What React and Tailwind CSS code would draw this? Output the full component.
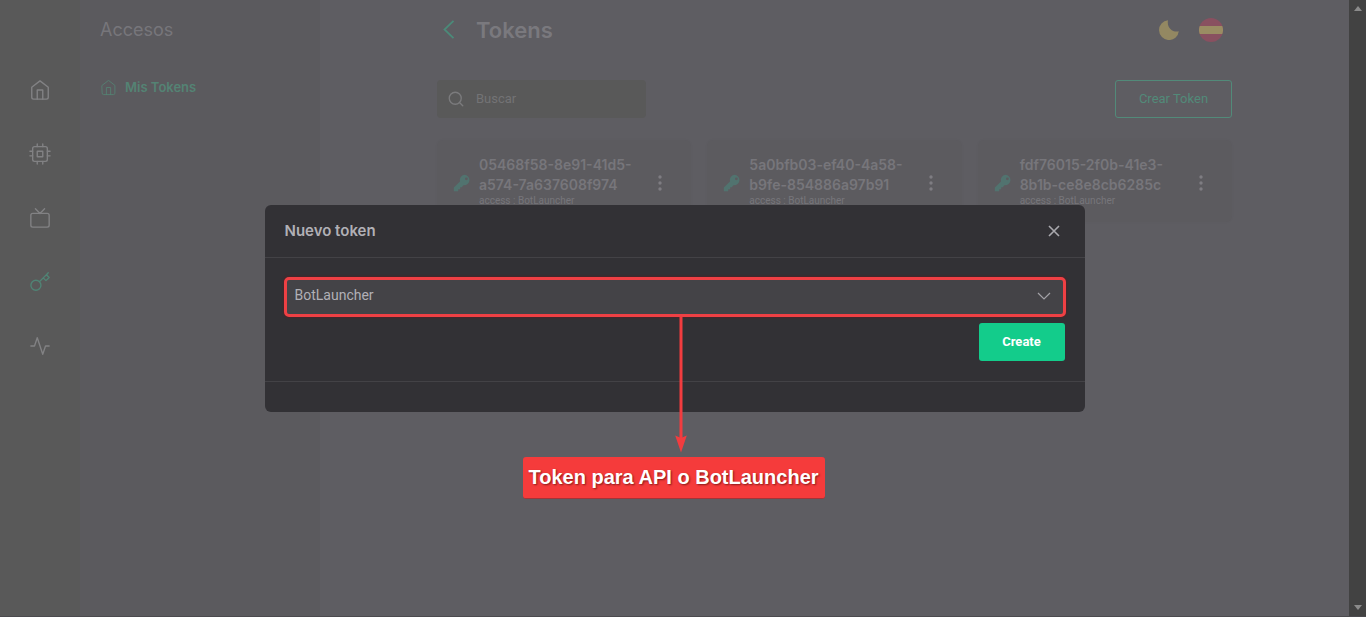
import React, { useState } from 'react';
import { FiActivity, FiCpu, FiHome, FiKey, FiSearch, FiTv } from 'react-icons/fi';

const tokens = [
  { id: 1, lines: ['05468f58-8e91-41d5-', 'a574-7a637608f974'], access: 'BotLauncher' },
  { id: 2, lines: ['5a0bfb03-ef40-4a58-', 'b9fe-854886a97b91'], access: 'BotLauncher' },
  { id: 3, lines: ['fdf76015-2f0b-41e3-', '8b1b-ce8e8cb6285c'], access: 'BotLauncher' },
];

const navItems = [
  { name: 'Inicio', icon: FiHome },
  { name: 'Bots', icon: FiCpu },
  { name: 'Streams', icon: FiTv },
  { name: 'Accesos', icon: FiKey, active: true },
  { name: 'Actividad', icon: FiActivity },
];

const TokenCard = ({ token }) => (
  <div className="flex h-[82px] items-center rounded-md bg-[#5c5b5f] pr-[29px] pl-4 shadow-[0_0_4px_rgba(0,0,0,0.02)]">
    <svg viewBox="0 0 18 18" className="mt-1 size-[18px] shrink-0 text-[#51736f]" fill="currentColor" aria-hidden="true">
      <path
        fillRule="evenodd"
        d="M12 .8a5.2 5.2 0 0 0-5 6.6L.8 13.6v3.6h4.4v-2h2v-2h1.6l1.6-2A5.2 5.2 0 1 0 12 .8Zm1.4 2.6a1.4 1.4 0 1 1 0 2.800 1.4 1.4 0 0 1 0-2.800Z"
      />
    </svg>
    <div className="ml-2 flex-1 whitespace-nowrap">
      <h3 className="font-['Inter',sans-serif] text-sm leading-5 font-semibold text-[#77767b]">
        {token.lines[0]}
        <br />
        {token.lines[1]}
      </h3>
      <p className="font-['Roboto',sans-serif] text-[10px] leading-3 text-[#77767b]">access : {token.access}</p>
    </div>
    <button aria-label="Opciones" className="mt-1 text-[#7e7d82]">
      <svg viewBox="0 0 4 16" className="h-4 w-1" fill="currentColor">
        <circle cx="2" cy="2" r="1.7" />
        <circle cx="2" cy="8" r="1.7" />
        <circle cx="2" cy="14" r="1.7" />
      </svg>
    </button>
  </div>
);

const NewTokenModal = () => {
  const [type, setType] = useState('BotLauncher');

  return (
    <div className="absolute inset-0 flex items-center justify-center">
      <div role="dialog" aria-labelledby="modal-title" className="relative w-full max-w-[820px] rounded-md bg-[#323135]">
        <div className="flex h-[53px] items-center justify-between border-b border-[#434246] px-5">
          <h2 id="modal-title" className="font-['Inter',sans-serif] text-[15px] leading-5 font-semibold text-[#b1b0b6]">
            Nuevo token
          </h2>
          <button aria-label="Cerrar" className="mr-1 text-[#aaa9ae]">
            <svg viewBox="0 0 14 14" className="size-[14px]" fill="none" stroke="currentColor" strokeWidth="1.6">
              <path d="m2 2 10 10M12 2 2 12" />
            </svg>
          </button>
        </div>
        <div className="flex flex-col items-end gap-[7px] border-b border-[#434246] p-5">
          <div className="relative w-full rounded-sm shadow-[0_0_2px_2px_rgba(110,20,25,0.4)] outline-[3px] -outline-offset-2 outline-[#ef4044]">
            <select
              aria-label="Tipo de token"
              value={type}
              onChange={(e) => setType(e.target.value)}
              className="block h-[38px] w-full appearance-none rounded-sm bg-[#444347] px-[10px] pb-1 font-['Roboto',sans-serif] text-sm text-[#b1b0b6]"
            >
              <option>BotLauncher</option>
              <option>API</option>
            </select>
            <svg
              viewBox="0 0 14 8"
              className="pointer-events-none absolute top-[14px] right-[14px] h-2 w-[14px] text-[#a3a2a7]"
              fill="none"
              stroke="currentColor"
              strokeWidth="1.2"
            >
              <path d="m1 1 6 6 6-6" />
            </svg>
          </div>
          <button className="h-[38px] w-[86px] rounded-[3px] bg-[#13cc8b] font-['Roboto',sans-serif] text-[13px] font-bold text-white">
            Create
          </button>
        </div>
        <div className="h-[30px]" />

        {/* callout for the token type field */}
        <div className="pointer-events-none absolute top-[111px] left-[258px] flex flex-col items-center">
          <svg viewBox="0 0 12 137" className="ml-[14px] h-[137px] w-3 text-[#f23c3f]" fill="currentColor" aria-hidden="true">
            <path d="M4.500 0h3v122h-3z" />
            <path d="M.2 119.500 6 122l5.800-2.500L6 136.500Z" />
          </svg>
          <p className="mt-1 flex h-[42px] items-center rounded-[3px] border-b border-[#a33438] bg-[#f53b3b] px-[6px] font-['Liberation_Sans',sans-serif] text-xl font-bold whitespace-nowrap text-white [text-shadow:1px_1px_2px_rgba(60,0,0,0.6)]">
            Token para API o BotLauncher
          </p>
        </div>
      </div>
    </div>
  );
};

const App = () => {
  const [search, setSearch] = useState('');

  return (
    <div className="flex h-screen overflow-hidden border-b border-[#4b4a4e] bg-[#5e5d62] font-['Roboto',sans-serif]">
      <div className="relative flex min-w-0 flex-1">
        <nav className="flex w-20 shrink-0 flex-col items-center gap-[42px] bg-[#595959] pt-[79px]">
          {navItems.map(({ name, icon: NavIcon, active }) => (
            <a key={name} href="#" aria-label={name} className={active ? 'text-[#508475]' : 'text-[#828284]'}>
              <NavIcon className="size-[22px]" strokeWidth="1.5" />
            </a>
          ))}
        </nav>

        <aside className="w-60 shrink-0 bg-[#5b5a5e] px-5 pt-4 font-['Inter',sans-serif]">
          <h2 className="text-lg leading-7 text-[#77767b]">Accesos</h2>
          <a href="#" className="mt-[31px] flex items-center gap-2 text-[13px] leading-6 font-semibold text-[#548374]">
            <FiHome className="size-[17px]" strokeWidth="1.2" />
            Mis Tokens
          </a>
        </aside>

        <main className="min-w-0 flex-1">
          <div className="mx-auto max-w-[795px] pt-4">
            <header className="flex h-7 items-center">
              <button aria-label="Volver" className="ml-[5px] text-[#4b8a79]">
                <svg viewBox="0 0 14 20" className="h-5 w-[14px]" fill="none" stroke="currentColor" strokeWidth="1.8">
                  <path d="M11.500 .8 2.500 9.500l9 8.700" />
                </svg>
              </button>
              <h1 className="ml-5 flex-1 font-['Inter',sans-serif] text-[22px] leading-7 font-semibold text-[#7a797e]">Tokens</h1>
              <button aria-label="Modo oscuro" className="mr-5 text-[#938862]">
                <svg viewBox="0 0 20 20" className="size-5" fill="currentColor">
                  <path d="M9 .3A9.900 9.900 0 1 0 19.800 11.200C14 13 7.500 7.500 9 .3Z" />
                </svg>
              </button>
              <button aria-label="Español" className="mr-[9px]">
                <svg viewBox="0 0 24 24" className="size-6">
                  <circle cx="12" cy="12" r="12" fill="#895060" />
                  <path d="M.7 8h22.600a12 12 0 0 1 0 8H.7a12 12 0 0 1 0-8Z" fill="#9a8c63" />
                </svg>
              </button>
            </header>

            <div className="mt-9 flex items-center justify-between">
              <label className="flex h-[38px] w-[209px] items-center gap-[11px] rounded-sm bg-[#595959] px-[10px] text-[#7b7b7d]">
                <FiSearch className="size-[18px] shrink-0" strokeWidth="1.8" />
                <input
                  type="text"
                  aria-label="Buscar"
                  placeholder="Buscar"
                  value={search}
                  onChange={(e) => setSearch(e.target.value)}
                  className="w-full min-w-0 bg-transparent text-[13px] outline-none placeholder:text-[#737375]"
                />
              </label>
              <button className="h-[38px] w-[117px] rounded-[3px] border border-[#528a79] text-[13px] text-[#528a79]">
                Crear Token
              </button>
            </div>

            <div className="mt-[22px] grid grid-cols-3 gap-4">
              {tokens.map((token) => (
                <TokenCard key={token.id} token={token} />
              ))}
            </div>
          </div>
        </main>

        <NewTokenModal />
      </div>

      <div className="flex w-[17px] shrink-0 flex-col items-center justify-between bg-[#424242] py-[6px] text-[#8b8b8b]" aria-hidden="true">
        <svg viewBox="0 0 8 5" className="h-[5px] w-2" fill="currentColor">
          <path d="M4 0 8 5H0Z" />
        </svg>
        <svg viewBox="0 0 8 5" className="h-[5px] w-2" fill="currentColor">
          <path d="M4 5 0 0h8Z" />
        </svg>
      </div>
    </div>
  );
};

export default App;
